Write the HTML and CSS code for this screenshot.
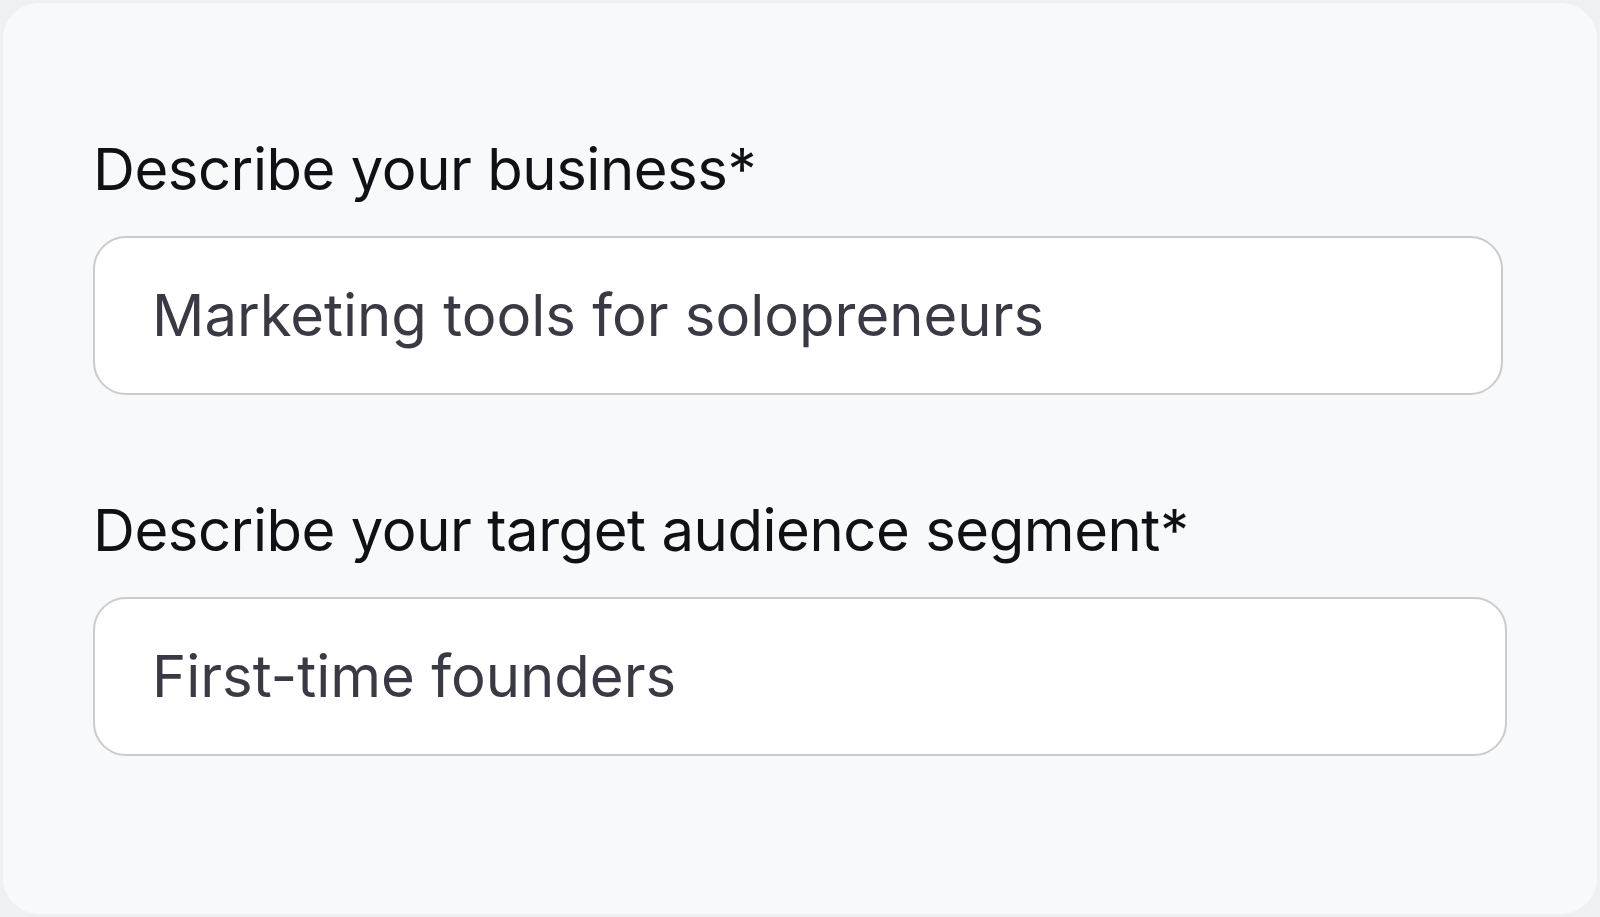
FILE: index.html
```html
<!DOCTYPE html>
<html lang="en">
<head>
<meta charset="utf-8">
<title>Business form</title>
<link rel="stylesheet" href="styles.css">
</head>
<body>
<main class="card">
  <div class="field">
    <label class="label" for="biz">Describe your business*</label>
    <div class="input input-narrow" id="biz">Marketing tools for solopreneurs</div>
  </div>
  <div class="field">
    <label class="label" for="aud">Describe your target audience segment*</label>
    <div class="input" id="aud">First-time founders</div>
  </div>
</main>
</body>
</html>
```
FILE: styles.css
```css
html, body {
  margin: 0;
  padding: 0;
  height: 100%;
}
body {
  background: #eff0f2;
  padding: 3px;
  box-sizing: border-box;
  font-family: Inter, "Liberation Sans", sans-serif;
}
.card {
  box-sizing: border-box;
  height: 911px;
  background: #f8f9fb;
  border-radius: 36px;
  padding: 131px 90px 0 90px;
  display: flex;
  flex-direction: column;
  gap: 100px;
}
.field {
  display: flex;
  flex-direction: column;
  gap: 32px;
}
.label {
  display: block;
  font-size: 58px;
  line-height: 70px;
  color: #0f1116;
  letter-spacing: -0.45px;
}
.input {
  box-sizing: border-box;
  height: 159px;
  background: #ffffff;
  border: 2px solid #cbcbcd;
  border-radius: 33px;
  padding: 42px 20px 42px 57px;
  font-size: 58px;
  line-height: 70px;
  color: #393a44;
  letter-spacing: 0;
}
.input-narrow {
  margin-right: 4px;
}
```
